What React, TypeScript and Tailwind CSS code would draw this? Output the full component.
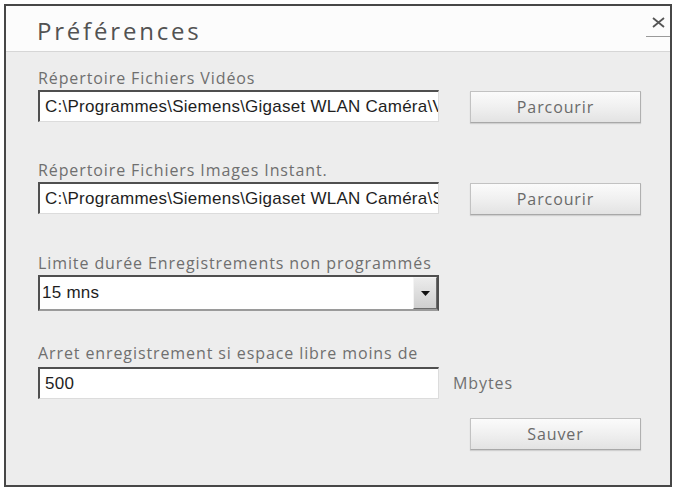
const labelCls =
  "block h-[20px] leading-[20px] text-[16px] tracking-[0.9px] text-[#6f6f6f] font-['Open_Sans',sans-serif]";
const fieldCls =
  "h-[32px] w-[401px] bg-white border-t-2 border-l-2 border-r border-b border-t-[#4f4f4f] border-l-[#4f4f4f] border-r-[#dcdcdc] border-b-[#dcdcdc] pl-[5px] flex items-center overflow-hidden whitespace-nowrap text-[17px] tracking-[0.25px] text-[#1e1e1e] font-['Liberation_Sans',Arial,sans-serif]";
const btnCls =
  "w-[171px] h-[32px] bg-gradient-to-b from-[#fbfbfb] via-[#f0f0f0] to-[#e3e3e3] border border-[#c2c2c2] border-b-[#a8a8a8] border-r-[#b0b0b0] shadow-[0_1px_1px_rgba(0,0,0,0.12)] text-[16px] tracking-[0.9px] text-[#6a6a6a] font-['Open_Sans',sans-serif] flex items-center justify-center";

function PathRow({ label, value }: { label: string; value: string }) {
  return (
    <div>
      <span className={labelCls}>{label}</span>
      <div className="mt-[2px] flex items-start gap-[31px]">
        <div className={fieldCls}>{value}</div>
        <button className={`${btnCls} mt-[1px]`}>Parcourir</button>
      </div>
    </div>
  );
}

export default function App() {
  return (
    <div className="w-[673px] h-[487px] bg-white pt-[4px] pl-[4px] overflow-hidden">
      <div className="w-[668px] h-[483px] border-2 border-[#474747] flex flex-col">
        {/* Header */}
        <div className="relative h-[46px] bg-[#fcfcfc] border-b border-[#d6d6d6] pl-[31px] flex items-center">
          <h1 className="text-[24px] font-medium tracking-[2.8px] text-[#525252] font-['Open_Sans',sans-serif] leading-none mt-[4px]">
            Préférences
          </h1>
          <div className="absolute right-0 top-[10px] w-[24px] h-[21px] border-b border-[#9a9a9a] flex items-start justify-center pt-[1px]">
            <svg width="13" height="11" viewBox="0 0 13 11">
              <path d="M1 1 L12 10 M12 1 L1 10" stroke="#555" strokeWidth="1.8" />
            </svg>
          </div>
        </div>

        {/* Body */}
        <div className="flex-1 bg-[#ededed] pl-[32px] pt-[16px]">
          <PathRow
            label="Répertoire Fichiers Vidéos"
            value="C:\Programmes\Siemens\Gigaset WLAN Caméra\V"
          />
          <div className="mt-[37px]">
            <PathRow
              label="Répertoire Fichiers Images Instant."
              value="C:\Programmes\Siemens\Gigaset WLAN Caméra\S"
            />
          </div>

          <div className="mt-[38px]">
            <span className={labelCls}>Limite durée Enregistrements non programmés</span>
            <div className="mt-[2px] w-[401px] h-[36px] bg-white border-2 border-[#4f4f4f] border-b-[#9a9a9a] flex items-stretch">
              <div className="flex-1 pl-[2px] flex items-center text-[17px] tracking-[0.25px] text-[#1e1e1e] font-['Liberation_Sans',Arial,sans-serif]">
                15 mns
              </div>
              <div className="w-[24px] bg-gradient-to-b from-[#ececec] to-[#cfcfcf] border-l border-t border-l-[#f4f4f4] border-t-[#f4f4f4] border-r border-b border-r-[#6b6b6b] border-b-[#6b6b6b] flex items-center justify-center">
                <svg width="9" height="5" viewBox="0 0 9 5">
                  <path d="M0 0 H9 L4.5 5 Z" fill="#111" />
                </svg>
              </div>
            </div>
          </div>

          <div className="mt-[32px]">
            <span className={labelCls}>Arret enregistrement si espace libre moins de</span>
            <div className="mt-[4px] flex items-center gap-[14px]">
              <div className={fieldCls}>500</div>
              <span className="text-[16px] tracking-[0.9px] text-[#707070] font-['Open_Sans',sans-serif]">
                Mbytes
              </span>
            </div>
            <div className="mt-[19px] pl-[432px]">
              <button className={btnCls}>Sauver</button>
            </div>
          </div>
        </div>
      </div>
    </div>
  );
}
